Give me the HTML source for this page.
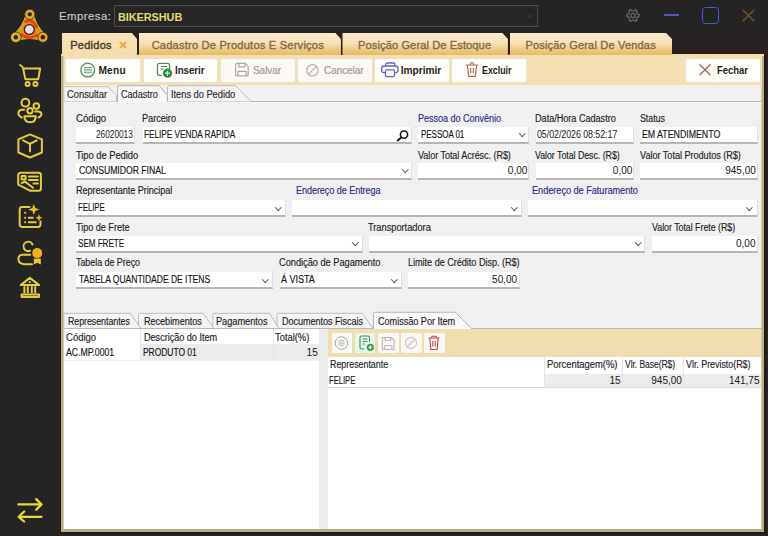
<!DOCTYPE html>
<html><head><meta charset="utf-8">
<style>
*{box-sizing:border-box;margin:0;padding:0}
html,body{width:768px;height:536px;overflow:hidden;background:#252424;font-family:"Liberation Sans",sans-serif;position:relative}
.a{position:absolute}
.t{position:absolute;white-space:pre;line-height:1}
svg{position:absolute;overflow:visible}
.tab{position:absolute;top:33px;height:22px;background:linear-gradient(#fbeccf 0%,#f8e2b6 45%,#efcb84 75%,#e6bb62 100%)}
.btn{position:absolute;top:58.5px;height:23px;background:#fefdfa;border-radius:2px;box-shadow:0 0 0 1px #ebe4c4}
.inp{position:absolute;height:17px;background:#fff;border-bottom:2px solid #b6b6b6;border-right:1px solid #e0e0e0}
.chev{position:absolute;width:4.5px;height:4.5px;border-right:1px solid #555;border-bottom:1px solid #555;transform:rotate(45deg)}
.stab{position:absolute;height:17px;background:#ececec;border-top:1px solid #c9c9c9;border-left:1px solid #d0d0d0}
.sbtn{position:absolute;top:333px;width:20.5px;height:20px;background:#fbf9f5;border-radius:2px}
</style></head><body>
<!-- main area dark tint -->
<div class="a" style="left:56px;top:28px;width:712px;height:508px;background:#282323"></div>

<!-- Empresa box -->
<div class="a" style="left:114px;top:5px;width:424px;height:22px;border:1.5px solid #4d4d4d;background:#272626"></div>
<div class="chev" style="left:528px;top:12.5px;width:4px;height:4px;border-color:#3c3c3c"></div>

<!-- top right icons -->
<svg style="left:626px;top:8.5px" width="14" height="13" viewBox="0 0 14 13"><path fill="none" stroke="#646464" stroke-width="1.4" stroke-linejoin="round" d="M13.20 6.50 L13.19 6.91 L13.15 7.31 L12.74 7.64 L12.12 7.87 L11.50 8.03 L11.07 8.18 L10.95 8.45 L10.81 8.70 L10.66 8.94 L10.49 9.18 L10.57 9.63 L10.75 10.25 L10.86 10.90 L10.77 11.42 L10.44 11.66 L10.10 11.87 L9.74 12.06 L9.37 12.23 L8.88 12.04 L8.37 11.62 L7.93 11.16 L7.57 10.86 L7.29 10.89 L7.00 10.90 L6.71 10.89 L6.43 10.86 L6.07 11.16 L5.63 11.62 L5.12 12.04 L4.63 12.23 L4.26 12.06 L3.90 11.87 L3.56 11.66 L3.23 11.42 L3.14 10.90 L3.25 10.25 L3.43 9.63 L3.51 9.18 L3.34 8.94 L3.19 8.70 L3.05 8.45 L2.93 8.18 L2.50 8.03 L1.88 7.87 L1.26 7.64 L0.85 7.31 L0.81 6.91 L0.80 6.50 L0.81 6.09 L0.85 5.69 L1.26 5.36 L1.88 5.13 L2.50 4.97 L2.93 4.82 L3.05 4.55 L3.19 4.30 L3.34 4.06 L3.51 3.82 L3.43 3.37 L3.25 2.75 L3.14 2.10 L3.23 1.58 L3.56 1.34 L3.90 1.13 L4.26 0.94 L4.63 0.77 L5.12 0.96 L5.63 1.38 L6.07 1.84 L6.43 2.14 L6.71 2.11 L7.00 2.10 L7.29 2.11 L7.57 2.14 L7.93 1.84 L8.37 1.38 L8.88 0.96 L9.37 0.77 L9.74 0.94 L10.10 1.13 L10.44 1.34 L10.77 1.58 L10.86 2.10 L10.75 2.75 L10.57 3.37 L10.49 3.82 L10.66 4.06 L10.81 4.30 L10.95 4.55 L11.07 4.82 L11.50 4.97 L12.12 5.13 L12.74 5.36 L13.15 5.69 L13.19 6.09Z"/><circle cx="7" cy="6.5" r="2.1" fill="none" stroke="#646464" stroke-width="1.3"/></svg>
<div class="a" style="left:664px;top:14px;width:15px;height:1.6px;background:#4a5cc4"></div>
<div class="a" style="left:702px;top:7.3px;width:17px;height:16.5px;border:1.8px solid #4a5cc8;border-radius:3.5px;background:#20241f"></div>
<svg style="left:742px;top:8.5px" width="13" height="13" viewBox="0 0 13 13"><path d="M0.7 0.7L12.3 12.3M12.3 0.7L0.7 12.3" stroke="#74502e" stroke-width="1.4"/></svg>

<!-- sidebar icons -->
<svg style="left:0;top:0" width="58" height="536" viewBox="0 0 58 536">
 <!-- logo -->
 <g>
  <path d="M29.8 14.3Q26.5 28 15.8 37.3Q29.4 32.5 42.9 37.3Q33 28 29.8 14.3Z" fill="#e8821c" stroke="#c8b02c" stroke-width="8" stroke-linejoin="round"/>
  <path d="M29.8 14.3Q26.5 28 15.8 37.3Q29.4 32.5 42.9 37.3Q33 28 29.8 14.3Z" fill="#ec7e1a" stroke="#e98a1e" stroke-width="4" stroke-linejoin="round"/>
  <path d="M24.5 22Q33 17.5 37 28" fill="none" stroke="#f23c10" stroke-width="2.8"/>
  <path d="M37.5 34.5Q29 41 20.5 34" fill="none" stroke="#f23c10" stroke-width="2.8"/>
  <path d="M21.3 31.5Q21 25 24.5 22" fill="none" stroke="#d89a28" stroke-width="2"/>
  <circle cx="29.8" cy="14.3" r="5.1" fill="#d8b42c" stroke="#2c1c10" stroke-width="0.7"/><circle cx="29.8" cy="14.3" r="2.1" fill="#3c1c10"/>
  <circle cx="15.8" cy="37.3" r="5.3" fill="#d0b830" stroke="#2c1c10" stroke-width="0.7"/><circle cx="15.8" cy="37.3" r="2.2" fill="#3c1c10"/>
  <circle cx="42.9" cy="37.3" r="5.1" fill="#e0a428" stroke="#2c1c10" stroke-width="0.7"/><circle cx="42.9" cy="37.3" r="2.2" fill="#3c1c10"/>
  <circle cx="29.3" cy="29.5" r="5.6" fill="#3a2614"/>
  <circle cx="29.3" cy="29.5" r="4.3" fill="#e8dce6"/>
 </g>
 <g fill="none" stroke="#e3cd3e" stroke-width="2" stroke-linecap="round" stroke-linejoin="round">
  <!-- cart -->
  <path d="M20.1 65.1Q22.6 66 23.1 68.4L25.4 79.2H38.2L40.2 68.4H23.1"/>
  <circle cx="27.6" cy="83.9" r="2"/><circle cx="35.4" cy="83.9" r="2"/>
  <!-- people -->
  <circle cx="25.4" cy="102.7" r="3.9"/><circle cx="36.3" cy="106.1" r="2.8"/><circle cx="30" cy="110.8" r="2.7"/>
  <path d="M24.1 109.8H21.2Q18.4 110.5 18.4 113.5Q18.6 116 21.7 117.5M35.2 111.5H38.5Q41.5 112 41.5 114.5Q41 116.5 38.5 117.5"/>
  <path d="M24.4 116.2h11.4q0 6-5.7 6t-5.7-6z"/>
  <!-- box hexagon -->
  <path d="M30 134.4l11.9 5v13.1L30 157.5l-11.6-5V139.4z"/>
  <path d="M23.1 140.4L30 143.8l6.8-3.4M30 143.8v7.7"/>
  <!-- card -->
  <path d="M20.6 172.8h18a2.3 2.3 0 0 1 2.3 2.3v13.4a2.3 2.3 0 0 1-2.3 2.3H30.5L18.2 184.6v-9.5a2.3 2.3 0 0 1 2.4-2.3z"/>
  <path d="M21.6 176.1h4v3.3h-4zM28.8 176.6h9M28.8 180h9M33.5 183.6h4.3M21.6 183l3.5-1.2 8 6"/>
  <!-- sparkle list -->
  <path d="M29.5 207.1h-7.4a2.4 2.4 0 0 0-2.4 2.4v15a2.4 2.4 0 0 0 2.4 2.4h16a2.4 2.4 0 0 0 2.4-2.4v-3"/>
  <path d="M25.1 212.8h.2M25.1 217.8h.2M25.1 222.2h.2M28.8 217.8h4M28.8 222.3h7"/>
  <!-- person medal -->
  <path d="M32.5 244.5A4.7 4.7 0 1 0 30 250.8"/>
  <path d="M30.1 254.8H22Q18.4 255.2 18.4 259Q18.6 263.8 24 264.2H32"/>
  <!-- bank -->
  <path d="M20.7 285.1L29.8 277.9 39.2 285.1Z"/>
  <path d="M24.4 287v5.5M27.8 287v5.5M31.8 287v5.5M35.2 287v5.5"/>
  <path d="M21.6 294.5h17.4v2.4H21.6z"/>
 </g>
 <g fill="none" stroke="#e8d838" stroke-width="2.3" stroke-linecap="round" stroke-linejoin="round">
  <path d="M18.4 504.4h23M36.2 499.1l5.3 5.3-5.3 5.4M41.5 516.8H18.7M24.1 511.5l-5.4 5.3 5.4 4.7"/>
 </g>
 <g fill="#eab82c">
  <path d="M33.8 203.8l1.5 4.1 4.1 1.5-4.1 1.5-1.5 4.1-1.5-4.1-4.1-1.5 4.1-1.5z"/>
  <path d="M38.9 214.2l1 2.6 2.6 1-2.6 1-1 2.6-1-2.6-2.6-1 2.6-1z"/>
  <circle cx="37.2" cy="253.1" r="5" fill="#f2b020"/>
  <path d="M33.8 258.5v6l3.4-1.8 3.6 1.8v-6z" fill="#e8c840"/>
  <circle cx="29.8" cy="282.2" r="1.1" fill="#e6cc40"/>
 </g>
</svg>

<!-- panel frame -->
<div class="a" style="left:60px;top:55px;width:706px;height:478.5px;background:#221c12"></div>
<div class="a" style="left:61.4px;top:55px;width:702.8px;height:476.5px;background:#b4ae88"></div>
<div class="a" style="left:63.2px;top:55px;width:698.6px;height:474.2px;background:#d4ceae"></div>
<div class="a" style="left:63.8px;top:55px;width:697.4px;height:473.5px;background:#f0f0f0"></div>

<div class="a" style="left:672px;top:47.5px;width:94px;height:7.5px;background:#2b1f1f"></div>
<div class="a" style="left:61.4px;top:54px;width:702.8px;height:1.5px;background:#ebe0a6"></div>
<!-- tabs -->
<div class="tab" style="left:62px;width:76px;background:linear-gradient(#f8e4bb,#f5dcaa)"></div>
<div class="tab" style="left:138.5px;width:202.5px"></div>
<div class="tab" style="left:342px;width:166.5px"></div>
<div class="tab" style="left:509.5px;width:162.5px"></div>
<svg style="left:0;top:0" width="768" height="60">
 <g fill="#2e2010">
  <path d="M132 33h6.5v22h-1.5v-16z"/>
  <path d="M335.5 33h7v22h-1.6v-16z"/>
  <path d="M502.5 33h7v22h-1.6v-16z"/>
 </g>
 <path d="M666 33h7v7z" fill="#2a2420"/>
 <path d="M120 42l6 6M126 42l-6 6" stroke="#e0b038" stroke-width="1.9"/>
</svg>

<!-- toolbar -->
<div class="a" style="left:63.5px;top:55px;width:698px;height:30px;background:#f4dfb3"></div>
<div class="btn" style="left:66px;width:74px"></div>
<div class="btn" style="left:144px;width:73.2px"></div>
<div class="btn" style="left:220.6px;width:74.5px;background:#fcf8f6"></div>
<div class="btn" style="left:297.6px;width:74px;background:#fcf8f6"></div>
<div class="btn" style="left:374.6px;width:74.5px"></div>
<div class="btn" style="left:452.2px;width:73.7px"></div>
<div class="btn" style="left:685.5px;width:74px"></div>
<svg style="left:0;top:0" width="768" height="90">
 <!-- menu icon -->
 <g fill="none" stroke="#4f9462" stroke-width="1.3">
  <circle cx="87.7" cy="70.1" r="6.9"/>
 </g>
 <path d="M84 67.7h8M84 70h8M84 72.3h8" stroke="#4f9462" stroke-width="1.1"/>
 <!-- inserir icon -->
 <g fill="none" stroke="#5a8a62" stroke-width="1.3" stroke-linejoin="round">
  <path d="M169.5 69v-3.7a2 2 0 0 0-2-2h-8a2 2 0 0 0-2 2v8a2 2 0 0 0 2 2h2.5"/>
 </g>
 <path d="M160.7 66.5h6.3M160.7 69h3" stroke="#3c9050" stroke-width="1.2"/>
 <circle cx="167.5" cy="73.2" r="4.6" fill="#2e8a3a"/>
 <path d="M165 73.2h5M167.5 70.7v5" stroke="#d8f0d8" stroke-width="1.2"/>
 <!-- salvar icon -->
 <g fill="none" stroke="#a9a9a9" stroke-width="1.2" stroke-linejoin="round">
  <path d="M237 63.4h8.3l2.9 2.9v8.2a1.4 1.4 0 0 1-1.4 1.4H237a1.4 1.4 0 0 1-1.4-1.4V64.8a1.4 1.4 0 0 1 1.4-1.4z"/>
  <path d="M238.8 63.4v3.5h6v-3.5M238 75.9v-4.5h8.2v4.5"/>
 </g>
 <!-- cancelar -->
 <g fill="none" stroke="#b3b3b3" stroke-width="1.2">
  <circle cx="312.4" cy="70.3" r="5.7"/><path d="M308.4 74.3l8-8"/>
 </g>
 <!-- imprimir -->
 <g fill="none" stroke="#5a66c4" stroke-width="1.3" stroke-linejoin="round">
  <path d="M385.8 66v-1.6a1.4 1.4 0 0 1 1.4-1.4h6.4a1.4 1.4 0 0 1 1.4 1.4V66"/>
  <path d="M385 72.6h-1a2.4 2.4 0 0 1-2.4-2.4v-1.8a2.4 2.4 0 0 1 2.4-2.4h11.6a2.4 2.4 0 0 1 2.4 2.4v1.8a2.4 2.4 0 0 1-2.4 2.4h-1"/>
  <path d="M387 69.8h6a1.6 1.6 0 0 1 1.6 1.6v3.6a1.6 1.6 0 0 1-1.6 1.6h-6a1.6 1.6 0 0 1-1.6-1.6v-3.6a1.6 1.6 0 0 1 1.6-1.6z"/>
 </g>
 <!-- excluir -->
 <g fill="none" stroke="#b4685a" stroke-width="1.2" stroke-linejoin="round">
  <path d="M465.8 65h12.4M470.3 65v-.8a1.7 1.7 0 0 1 3.4 0v.8M467.2 65l1.6 11.3h6.4l1.6-11.3M470.6 68v5M473.4 68v5"/>
 </g>
 <!-- fechar -->
 <path d="M699.5 64.2l11 11M710.5 64.2l-11 11" stroke="#9a6454" stroke-width="1.3"/>
</svg>

<!-- subtab row -->
<div class="a" style="left:63.5px;top:85px;width:698px;height:1px;background:#f6f0dc"></div>
<div class="a" style="left:63.5px;top:101px;width:698px;height:1px;background:#b4b4b4"></div>
<div class="a" style="left:63.5px;top:102px;width:698px;height:1px;background:#f7f7f7"></div>
<svg style="left:0;top:0" width="768" height="110">
 <path d="M63.8 101.5V86.7h44l8.5 8.5v6.3" fill="#f5f5f5" stroke="#c0c0c0" stroke-width="1"/>
 <path d="M167.5 101.5V87.5a1.8 1.8 0 0 1 1.8-1.8h66.4l15.5 15.8" fill="#f4f4f4" stroke="#b8b8b8" stroke-width="1"/>
 <path d="M117.5 101.5V87.5a1.8 1.8 0 0 1 1.8-1.8h39.8l8.2 9.5v6.3" fill="#f8f8f8" stroke="#b0b0b0" stroke-width="1"/>
 <path d="M118 101.5h49" stroke="#f8f8f8" stroke-width="1.2"/>
</svg>

<!-- form inputs -->
<div class="inp" style="left:76.3px;top:127px;width:58.7px"></div>
<div class="inp" style="left:142.7px;top:127px;width:269.6px"></div>
<div class="inp" style="left:418.3px;top:127px;width:111px"></div>
<div class="inp" style="left:535.8px;top:127px;width:98.6px"></div>
<div class="inp" style="left:640.4px;top:127px;width:117.2px"></div>

<div class="inp" style="left:76.3px;top:163px;width:336px"></div>
<div class="inp" style="left:418.3px;top:163px;width:111px"></div>
<div class="inp" style="left:535.8px;top:163px;width:98.6px"></div>
<div class="inp" style="left:640.4px;top:163px;width:117.2px"></div>

<div class="inp" style="left:76px;top:200px;width:210px"></div>
<div class="inp" style="left:291.7px;top:200px;width:230.3px"></div>
<div class="inp" style="left:528px;top:200px;width:230.3px"></div>

<div class="inp" style="left:76px;top:235.5px;width:287px"></div>
<div class="inp" style="left:368.7px;top:235.5px;width:276.6px"></div>
<div class="inp" style="left:652.4px;top:235.5px;width:105.9px"></div>

<div class="inp" style="left:76px;top:272px;width:196.9px"></div>
<div class="inp" style="left:279.5px;top:272px;width:122.5px"></div>
<div class="inp" style="left:408.1px;top:272px;width:111.7px"></div>

<!-- chevrons -->
<div class="chev" style="left:519.5px;top:131px"></div>
<div class="chev" style="left:402.5px;top:167px"></div>
<div class="chev" style="left:275.5px;top:204.5px"></div>
<div class="chev" style="left:511.5px;top:204.5px"></div>
<div class="chev" style="left:747px;top:204.5px"></div>
<div class="chev" style="left:352.5px;top:240px"></div>
<div class="chev" style="left:636px;top:240px"></div>
<div class="chev" style="left:262.5px;top:276.5px"></div>
<div class="chev" style="left:391.5px;top:276.5px"></div>
<!-- search icon -->
<svg style="left:396px;top:129.5px" width="13" height="12" viewBox="0 0 13 12"><circle cx="8" cy="4.6" r="3.6" fill="none" stroke="#1a1a1a" stroke-width="1.6"/><path d="M5.5 7.2L1.2 11" stroke="#1a1a1a" stroke-width="2"/></svg>

<!-- bottom tab row -->
<svg style="left:0;top:0" width="768" height="340">
 <path d="M373.5 328V313.5a1.2 1.2 0 0 1 1.2-1.2h80.5l16 15.7" fill="#fafafa" stroke="#b4b4b4" stroke-width="1"/>
 <path d="M277 328V314.5a1.2 1.2 0 0 1 1.2-1.2h84l10.5 14.7" fill="#f3f3f3" stroke="#bcbcbc" stroke-width="1"/>
 <path d="M212.8 328V314.5a1.2 1.2 0 0 1 1.2-1.2h55.3l9.5 14.7" fill="#f3f3f3" stroke="#bcbcbc" stroke-width="1"/>
 <path d="M138.5 328V314.5a1.2 1.2 0 0 1 1.2-1.2h63.5l10.4 14.7" fill="#f3f3f3" stroke="#bcbcbc" stroke-width="1"/>
 <path d="M63.8 328V313.3h66.5l10.4 14.7" fill="#f3f3f3" stroke="#bcbcbc" stroke-width="1"/>
</svg>

<!-- left grid -->
<div class="a" style="left:63.5px;top:328px;width:255px;height:200.5px;background:#fff"></div>
<div class="a" style="left:140px;top:344px;width:178.5px;height:15.5px;background:#ebebeb"></div>
<div class="a" style="left:140px;top:328px;width:1px;height:31.5px;background:#e6e6e6"></div>
<div class="a" style="left:272.5px;top:328px;width:1px;height:31.5px;background:#e6e6e6"></div>
<div class="a" style="left:63.5px;top:359.5px;width:255px;height:1px;background:#eeeeee"></div>
<div class="a" style="left:318.5px;top:328px;width:9px;height:200.5px;background:#ececec"></div>

<!-- right panel -->
<div class="a" style="left:327.5px;top:328px;width:433.7px;height:200.5px;background:#fff"></div>
<div class="a" style="left:327.5px;top:329px;width:433.7px;height:27.5px;background:#f0ddb0"></div>
<div class="a" style="left:63.5px;top:327.5px;width:698px;height:1px;background:#b8b8b8"></div>
<div class="a" style="left:374px;top:327.5px;width:97px;height:1px;background:#fafafa"></div>
<div class="sbtn" style="left:331.5px"></div>
<div class="sbtn" style="left:354.8px;background:#e6f8ee"></div>
<div class="sbtn" style="left:378px"></div>
<div class="sbtn" style="left:401px"></div>
<div class="sbtn" style="left:424px"></div>
<svg style="left:0;top:0" width="768" height="360">
 <g fill="none" stroke="#a8a8a8" stroke-width="1">
  <circle cx="341.5" cy="343" r="6.3"/><path d="M338.6 340.8h5.8M338.6 343h5.8M338.6 345.2h5.8" stroke-width="0.9"/>
 </g>
 <g fill="none" stroke="#3c9050" stroke-width="1.1" stroke-linejoin="round">
  <path d="M369.5 342v-4.5a1.5 1.5 0 0 0-1.5-1.5h-6.5a1.5 1.5 0 0 0-1.5 1.5v10a1.5 1.5 0 0 0 1.5 1.5h3"/><path d="M362.5 339h5M362.5 341.5h5M362.5 344h2.5"/>
 </g>
 <circle cx="370.3" cy="347.3" r="3.6" fill="#38a048"/>
 <path d="M368.4 347.3h3.8M370.3 345.4v3.8" stroke="#fff" stroke-width="1.1"/>
 <g fill="none" stroke="#b8b8b8" stroke-width="1.1" stroke-linejoin="round">
  <path d="M382.5 337.5h8.5l3 3v9h-11.5z"/><path d="M385 337.5v3h5.5v-3M384.8 349.5v-4h7v4"/>
 </g>
 <g fill="none" stroke="#c8c8c8" stroke-width="1.1">
  <circle cx="411" cy="343" r="5.6"/><path d="M407 347l8-8"/>
 </g>
 <g fill="none" stroke="#c84848" stroke-width="1.1" stroke-linejoin="round">
  <path d="M428.5 338h11M431.8 338v-1.8h4.4v1.8M429.8 338l1 11.5h6.4l1-11.5M432.8 341v5.5M435.2 341v5.5"/>
 </g>
</svg>
<div class="a" style="left:544px;top:374px;width:217.2px;height:13.5px;background:#ececec"></div>
<div class="a" style="left:544px;top:356.5px;width:1px;height:31px;background:#e4e4e4"></div>
<div class="a" style="left:621.5px;top:356.5px;width:1px;height:31px;background:#e4e4e4"></div>
<div class="a" style="left:683px;top:356.5px;width:1px;height:31px;background:#e4e4e4"></div>
<div class="a" style="left:327.5px;top:387px;width:433.7px;height:1px;background:#dcdcdc"></div>

<div class="t" style="left:59.13px;top:11.32px;font-size:11.2px;font-weight:400;color:#c9c9c9;letter-spacing:0.400px;transform:scaleX(1.023);transform-origin:left top;-webkit-text-stroke:0.15px #c9c9c9;">Empresa:</div>
<div class="t" style="left:118.46px;top:11.62px;font-size:11.2px;font-weight:700;color:#e2dc6c;letter-spacing:-0.050px;transform:scaleX(0.972);transform-origin:left top;">BIKERSHUB</div>
<div class="t" style="left:70.14px;top:40.00px;font-size:11.1px;font-weight:400;color:#463c30;letter-spacing:0.236px;-webkit-text-stroke:0.4px #463c30;">Pedidos</div>
<div class="t" style="left:151.64px;top:40.00px;font-size:11.1px;font-weight:400;color:#7f6a4c;letter-spacing:0.208px;-webkit-text-stroke:0.35px #7f6a4c;">Cadastro De Produtos E Serviços</div>
<div class="t" style="left:358.05px;top:40.00px;font-size:11.1px;font-weight:400;color:#7f6a4c;letter-spacing:0.099px;-webkit-text-stroke:0.35px #7f6a4c;">Posição Geral De Estoque</div>
<div class="t" style="left:525.45px;top:40.00px;font-size:11.1px;font-weight:400;color:#7f6a4c;letter-spacing:0.148px;-webkit-text-stroke:0.35px #7f6a4c;">Posição Geral De Vendas</div>
<div class="t" style="left:98.39px;top:66.17px;font-size:10.2px;font-weight:700;color:#1f1f24;letter-spacing:0.254px;">Menu</div>
<div class="t" style="left:175.41px;top:66.17px;font-size:10.2px;font-weight:700;color:#1f1f24;letter-spacing:-0.050px;transform:scaleX(0.959);transform-origin:left top;">Inserir</div>
<div class="t" style="left:252.90px;top:66.17px;font-size:10.2px;font-weight:400;color:#9b9b9b;letter-spacing:-0.050px;transform:scaleX(0.981);transform-origin:left top;-webkit-text-stroke:0.2px #9b9b9b;">Salvar</div>
<div class="t" style="left:323.60px;top:66.17px;font-size:10.2px;font-weight:400;color:#9b9b9b;letter-spacing:-0.050px;transform:scaleX(0.979);transform-origin:left top;-webkit-text-stroke:0.2px #9b9b9b;">Cancelar</div>
<div class="t" style="left:400.69px;top:66.17px;font-size:10.2px;font-weight:700;color:#1f1f24;letter-spacing:-0.028px;">Imprimir</div>
<div class="t" style="left:482.45px;top:66.17px;font-size:10.2px;font-weight:700;color:#1f1f24;letter-spacing:-0.050px;transform:scaleX(0.876);transform-origin:left top;">Excluir</div>
<div class="t" style="left:716.52px;top:66.17px;font-size:10.2px;font-weight:700;color:#1f1f24;letter-spacing:-0.050px;transform:scaleX(0.933);transform-origin:left top;">Fechar</div>
<div class="t" style="left:67.23px;top:89.73px;font-size:10px;font-weight:400;color:#2a2a2a;letter-spacing:-0.050px;transform:scaleX(0.944);transform-origin:left top;-webkit-text-stroke:0.15px #2a2a2a;">Consultar</div>
<div class="t" style="left:120.64px;top:89.73px;font-size:10px;font-weight:400;color:#2a2a2a;letter-spacing:-0.050px;transform:scaleX(0.915);transform-origin:left top;-webkit-text-stroke:0.15px #2a2a2a;">Cadastro</div>
<div class="t" style="left:171.43px;top:89.73px;font-size:10px;font-weight:400;color:#2a2a2a;letter-spacing:-0.050px;transform:scaleX(0.934);transform-origin:left top;-webkit-text-stroke:0.15px #2a2a2a;">Itens do Pedido</div>
<div class="t" style="left:75.62px;top:114.13px;font-size:10px;font-weight:400;color:#1e1e1e;letter-spacing:-0.050px;transform:scaleX(0.959);transform-origin:left top;-webkit-text-stroke:0.15px #1e1e1e;">Código</div>
<div class="t" style="left:141.74px;top:114.13px;font-size:10px;font-weight:400;color:#1e1e1e;letter-spacing:-0.050px;transform:scaleX(0.922);transform-origin:left top;-webkit-text-stroke:0.15px #1e1e1e;">Parceiro</div>
<div class="t" style="left:417.85px;top:114.13px;font-size:10px;font-weight:400;color:#2c2c8c;letter-spacing:-0.050px;transform:scaleX(0.908);transform-origin:left top;-webkit-text-stroke:0.15px #2c2c8c;">Pessoa do Convênio</div>
<div class="t" style="left:535.34px;top:114.13px;font-size:10px;font-weight:400;color:#1e1e1e;letter-spacing:-0.050px;transform:scaleX(0.917);transform-origin:left top;-webkit-text-stroke:0.15px #1e1e1e;">Data/Hora Cadastro</div>
<div class="t" style="left:639.96px;top:114.13px;font-size:10px;font-weight:400;color:#1e1e1e;letter-spacing:-0.050px;transform:scaleX(0.885);transform-origin:left top;-webkit-text-stroke:0.15px #1e1e1e;">Status</div>
<div class="t" style="left:95.78px;top:129.73px;font-size:10px;font-weight:400;color:#161616;letter-spacing:-0.050px;transform:scaleX(0.834);transform-origin:left top;">26020013</div>
<div class="t" style="left:144.39px;top:129.73px;font-size:10px;font-weight:400;color:#161616;letter-spacing:-0.050px;transform:scaleX(0.827);transform-origin:left top;-webkit-text-stroke:0.15px #161616;">FELIPE VENDA RAPIDA</div>
<div class="t" style="left:421.30px;top:129.73px;font-size:10px;font-weight:400;color:#161616;letter-spacing:-0.050px;transform:scaleX(0.801);transform-origin:left top;-webkit-text-stroke:0.15px #161616;">PESSOA 01</div>
<div class="t" style="left:537.16px;top:129.73px;font-size:10px;font-weight:400;color:#161616;letter-spacing:-0.050px;transform:scaleX(0.884);transform-origin:left top;">05/02/2026 08:52:17</div>
<div class="t" style="left:641.76px;top:129.73px;font-size:10px;font-weight:400;color:#161616;letter-spacing:-0.050px;transform:scaleX(0.885);transform-origin:left top;-webkit-text-stroke:0.15px #161616;">EM ATENDIMENTO</div>
<div class="t" style="left:75.83px;top:150.73px;font-size:10px;font-weight:400;color:#1e1e1e;letter-spacing:-0.050px;transform:scaleX(0.938);transform-origin:left top;-webkit-text-stroke:0.15px #1e1e1e;">Tipo de Pedido</div>
<div class="t" style="left:417.85px;top:150.73px;font-size:10px;font-weight:400;color:#1e1e1e;letter-spacing:-0.050px;transform:scaleX(0.902);transform-origin:left top;-webkit-text-stroke:0.15px #1e1e1e;">Valor Total Acrésc. (R$)</div>
<div class="t" style="left:535.36px;top:150.73px;font-size:10px;font-weight:400;color:#1e1e1e;letter-spacing:-0.050px;transform:scaleX(0.884);transform-origin:left top;-webkit-text-stroke:0.15px #1e1e1e;">Valor Total Desc. (R$)</div>
<div class="t" style="left:639.94px;top:150.73px;font-size:10px;font-weight:400;color:#1e1e1e;letter-spacing:-0.050px;transform:scaleX(0.916);transform-origin:left top;-webkit-text-stroke:0.15px #1e1e1e;">Valor Total Produtos (R$)</div>
<div class="t" style="left:78.57px;top:165.83px;font-size:10px;font-weight:400;color:#161616;letter-spacing:-0.050px;transform:scaleX(0.869);transform-origin:left top;-webkit-text-stroke:0.15px #161616;">CONSUMIDOR FINAL</div>
<div class="t" style="right:240.70px;top:165.83px;font-size:10px;font-weight:400;color:#161616;">0,00</div>
<div class="t" style="right:135.70px;top:165.83px;font-size:10px;font-weight:400;color:#161616;">0,00</div>
<div class="t" style="right:12.20px;top:165.83px;font-size:10px;font-weight:400;color:#161616;">945,00</div>
<div class="t" style="left:75.54px;top:186.23px;font-size:10px;font-weight:400;color:#1e1e1e;letter-spacing:-0.050px;transform:scaleX(0.912);transform-origin:left top;-webkit-text-stroke:0.15px #1e1e1e;">Representante Principal</div>
<div class="t" style="left:296.45px;top:186.23px;font-size:10px;font-weight:400;color:#2c2c8c;letter-spacing:-0.050px;transform:scaleX(0.903);transform-origin:left top;-webkit-text-stroke:0.15px #2c2c8c;">Endereço de Entrega</div>
<div class="t" style="left:532.44px;top:186.23px;font-size:10px;font-weight:400;color:#2c2c8c;letter-spacing:-0.050px;transform:scaleX(0.920);transform-origin:left top;-webkit-text-stroke:0.15px #2c2c8c;">Endereço de Faturamento</div>
<div class="t" style="left:77.86px;top:202.73px;font-size:10px;font-weight:400;color:#161616;letter-spacing:-0.050px;transform:scaleX(0.781);transform-origin:left top;-webkit-text-stroke:0.15px #161616;">FELIPE</div>
<div class="t" style="left:75.54px;top:222.73px;font-size:10px;font-weight:400;color:#1e1e1e;letter-spacing:-0.050px;transform:scaleX(0.915);transform-origin:left top;-webkit-text-stroke:0.15px #1e1e1e;">Tipo de Frete</div>
<div class="t" style="left:368.23px;top:222.73px;font-size:10px;font-weight:400;color:#1e1e1e;letter-spacing:-0.050px;transform:scaleX(0.933);transform-origin:left top;-webkit-text-stroke:0.15px #1e1e1e;">Transportadora</div>
<div class="t" style="left:651.96px;top:222.73px;font-size:10px;font-weight:400;color:#1e1e1e;letter-spacing:-0.050px;transform:scaleX(0.889);transform-origin:left top;-webkit-text-stroke:0.15px #1e1e1e;">Valor Total Frete (R$)</div>
<div class="t" style="left:77.84px;top:238.53px;font-size:10px;font-weight:400;color:#161616;letter-spacing:-0.050px;transform:scaleX(0.812);transform-origin:left top;-webkit-text-stroke:0.15px #161616;">SEM FRETE</div>
<div class="t" style="right:12.50px;top:238.53px;font-size:10px;font-weight:400;color:#161616;">0,00</div>
<div class="t" style="left:75.55px;top:258.44px;font-size:10px;font-weight:400;color:#1e1e1e;letter-spacing:-0.050px;transform:scaleX(0.895);transform-origin:left top;-webkit-text-stroke:0.15px #1e1e1e;">Tabela de Preço</div>
<div class="t" style="left:279.04px;top:258.44px;font-size:10px;font-weight:400;color:#1e1e1e;letter-spacing:-0.050px;transform:scaleX(0.930);transform-origin:left top;-webkit-text-stroke:0.15px #1e1e1e;">Condição de Pagamento</div>
<div class="t" style="left:407.64px;top:258.44px;font-size:10px;font-weight:400;color:#1e1e1e;letter-spacing:-0.050px;transform:scaleX(0.915);transform-origin:left top;-webkit-text-stroke:0.15px #1e1e1e;">Limite de Crédito Disp. (R$)</div>
<div class="t" style="left:78.77px;top:274.94px;font-size:10px;font-weight:400;color:#161616;letter-spacing:-0.050px;transform:scaleX(0.857);transform-origin:left top;-webkit-text-stroke:0.15px #161616;">TABELA QUANTIDADE DE ITENS</div>
<div class="t" style="left:281.35px;top:274.94px;font-size:10px;font-weight:400;color:#161616;letter-spacing:-0.050px;transform:scaleX(0.906);transform-origin:left top;-webkit-text-stroke:0.15px #161616;">Á VISTA</div>
<div class="t" style="right:250.90px;top:274.94px;font-size:10px;font-weight:400;color:#161616;">50,00</div>
<div class="t" style="left:67.81px;top:316.94px;font-size:10px;font-weight:400;color:#1e1e1e;letter-spacing:-0.050px;transform:scaleX(0.884);transform-origin:left top;-webkit-text-stroke:0.15px #1e1e1e;">Representantes</div>
<div class="t" style="left:144.34px;top:316.94px;font-size:10px;font-weight:400;color:#1e1e1e;letter-spacing:-0.050px;transform:scaleX(0.912);transform-origin:left top;-webkit-text-stroke:0.15px #1e1e1e;">Recebimentos</div>
<div class="t" style="left:216.24px;top:316.94px;font-size:10px;font-weight:400;color:#1e1e1e;letter-spacing:-0.050px;transform:scaleX(0.925);transform-origin:left top;-webkit-text-stroke:0.15px #1e1e1e;">Pagamentos</div>
<div class="t" style="left:282.45px;top:316.94px;font-size:10px;font-weight:400;color:#1e1e1e;letter-spacing:-0.050px;transform:scaleX(0.909);transform-origin:left top;-webkit-text-stroke:0.15px #1e1e1e;">Documentos Fiscais</div>
<div class="t" style="left:377.84px;top:316.94px;font-size:10px;font-weight:400;color:#1e1e1e;letter-spacing:-0.050px;transform:scaleX(0.916);transform-origin:left top;-webkit-text-stroke:0.15px #1e1e1e;">Comissão Por Item</div>
<div class="t" style="left:66.22px;top:333.04px;font-size:10px;font-weight:400;color:#1e1e1e;letter-spacing:-0.050px;transform:scaleX(0.959);transform-origin:left top;-webkit-text-stroke:0.15px #1e1e1e;">Código</div>
<div class="t" style="left:143.54px;top:333.04px;font-size:10px;font-weight:400;color:#1e1e1e;letter-spacing:-0.050px;transform:scaleX(0.916);transform-origin:left top;-webkit-text-stroke:0.15px #1e1e1e;">Descrição do Item</div>
<div class="t" style="left:275.03px;top:333.04px;font-size:10px;font-weight:400;color:#1e1e1e;letter-spacing:-0.050px;transform:scaleX(0.945);transform-origin:left top;-webkit-text-stroke:0.15px #1e1e1e;">Total(%)</div>
<div class="t" style="left:66.26px;top:347.84px;font-size:10px;font-weight:400;color:#161616;letter-spacing:-0.050px;transform:scaleX(0.877);transform-origin:left top;-webkit-text-stroke:0.15px #161616;">AC.MP.0001</div>
<div class="t" style="left:142.83px;top:347.84px;font-size:10px;font-weight:400;color:#161616;letter-spacing:-0.050px;transform:scaleX(0.849);transform-origin:left top;-webkit-text-stroke:0.15px #161616;">PRODUTO 01</div>
<div class="t" style="right:450.30px;top:347.84px;font-size:10px;font-weight:400;color:#161616;">15</div>
<div class="t" style="left:330.15px;top:360.44px;font-size:10px;font-weight:400;color:#1e1e1e;letter-spacing:-0.050px;transform:scaleX(0.894);transform-origin:left top;-webkit-text-stroke:0.15px #1e1e1e;">Representante</div>
<div class="t" style="left:546.93px;top:360.44px;font-size:10px;font-weight:400;color:#1e1e1e;letter-spacing:-0.050px;transform:scaleX(0.947);transform-origin:left top;-webkit-text-stroke:0.15px #1e1e1e;">Porcentagem(%)</div>
<div class="t" style="left:624.57px;top:360.44px;font-size:10px;font-weight:400;color:#1e1e1e;letter-spacing:-0.050px;transform:scaleX(0.852);transform-origin:left top;-webkit-text-stroke:0.15px #1e1e1e;">Vlr. Base(R$)</div>
<div class="t" style="left:685.85px;top:360.44px;font-size:10px;font-weight:400;color:#1e1e1e;letter-spacing:-0.050px;transform:scaleX(0.896);transform-origin:left top;-webkit-text-stroke:0.15px #1e1e1e;">Vlr. Previsto(R$)</div>
<div class="t" style="left:329.12px;top:376.04px;font-size:10px;font-weight:400;color:#161616;letter-spacing:-0.050px;transform:scaleX(0.768);transform-origin:left top;-webkit-text-stroke:0.15px #161616;">FELIPE</div>
<div class="t" style="right:147.50px;top:376.04px;font-size:10px;font-weight:400;color:#161616;">15</div>
<div class="t" style="right:86.10px;top:376.04px;font-size:10px;font-weight:400;color:#161616;">945,00</div>
<div class="t" style="right:8.50px;top:376.04px;font-size:10px;font-weight:400;color:#161616;">141,75</div>
</body></html>
